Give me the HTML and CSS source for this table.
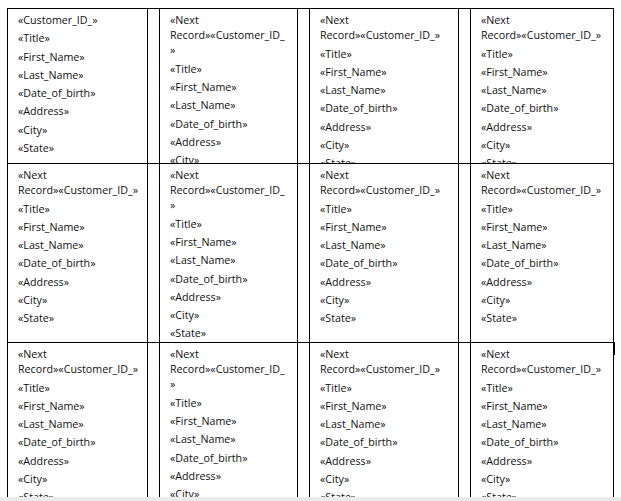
FILE: index.html
```html
<!DOCTYPE html>
<html lang="en">
<head>
<meta charset="utf-8">
<title>Mail merge labels</title>
<link rel="stylesheet" href="styles.css">
</head>
<body>
<div class="page">
  <div class="viewport">
    <div class="sheet">
      <!-- row 1 -->
      <div class="label">
        <p>«Customer_ID_»</p><p>«Title»</p><p>«First_Name»</p><p>«Last_Name»</p><p>«Date_of_birth»</p><p>«Address»</p><p>«City»</p><p>«State»</p>
      </div>
      <div class="gap"></div>
      <div class="label">
        <p>«Next Record»«Customer_ID_<br>»</p><p>«Title»</p><p>«First_Name»</p><p>«Last_Name»</p><p>«Date_of_birth»</p><p>«Address»</p><p>«City»</p><p>«State»</p>
      </div>
      <div class="gap"></div>
      <div class="label">
        <p>«Next Record»«Customer_ID_»</p><p>«Title»</p><p>«First_Name»</p><p>«Last_Name»</p><p>«Date_of_birth»</p><p>«Address»</p><p>«City»</p><p>«State»</p>
      </div>
      <div class="gap"></div>
      <div class="label">
        <p>«Next Record»«Customer_ID_»</p><p>«Title»</p><p>«First_Name»</p><p>«Last_Name»</p><p>«Date_of_birth»</p><p>«Address»</p><p>«City»</p><p>«State»</p>
      </div>
      <!-- row 2 -->
      <div class="label">
        <p>«Next Record»«Customer_ID_»</p><p>«Title»</p><p>«First_Name»</p><p>«Last_Name»</p><p>«Date_of_birth»</p><p>«Address»</p><p>«City»</p><p>«State»</p>
      </div>
      <div class="gap"></div>
      <div class="label">
        <p>«Next Record»«Customer_ID_<br>»</p><p>«Title»</p><p>«First_Name»</p><p>«Last_Name»</p><p>«Date_of_birth»</p><p>«Address»</p><p>«City»</p><p>«State»</p>
      </div>
      <div class="gap"></div>
      <div class="label">
        <p>«Next Record»«Customer_ID_»</p><p>«Title»</p><p>«First_Name»</p><p>«Last_Name»</p><p>«Date_of_birth»</p><p>«Address»</p><p>«City»</p><p>«State»</p>
      </div>
      <div class="gap"></div>
      <div class="label">
        <p>«Next Record»«Customer_ID_»</p><p>«Title»</p><p>«First_Name»</p><p>«Last_Name»</p><p>«Date_of_birth»</p><p>«Address»</p><p>«City»</p><p>«State»</p>
      </div>
      <!-- row 3 -->
      <div class="label">
        <p>«Next Record»«Customer_ID_»</p><p>«Title»</p><p>«First_Name»</p><p>«Last_Name»</p><p>«Date_of_birth»</p><p>«Address»</p><p>«City»</p><p>«State»</p>
      </div>
      <div class="gap"></div>
      <div class="label">
        <p>«Next Record»«Customer_ID_<br>»</p><p>«Title»</p><p>«First_Name»</p><p>«Last_Name»</p><p>«Date_of_birth»</p><p>«Address»</p><p>«City»</p><p>«State»</p>
      </div>
      <div class="gap"></div>
      <div class="label">
        <p>«Next Record»«Customer_ID_»</p><p>«Title»</p><p>«First_Name»</p><p>«Last_Name»</p><p>«Date_of_birth»</p><p>«Address»</p><p>«City»</p><p>«State»</p>
      </div>
      <div class="gap"></div>
      <div class="label">
        <p>«Next Record»«Customer_ID_»</p><p>«Title»</p><p>«First_Name»</p><p>«Last_Name»</p><p>«Date_of_birth»</p><p>«Address»</p><p>«City»</p><p>«State»</p>
      </div>
    </div>
  </div>
  <div class="statusbar"></div>
  <span class="rowmark"></span>
</div>
</body>
</html>
```
FILE: styles.css
```css
* { box-sizing: border-box; }

html, body {
  margin: 0;
  padding: 0;
  background: #ffffff;
}

.page {
  position: relative;
  width: 621px;
  height: 501px;
  display: flex;
  flex-direction: column;
  font-family: "Open Sans", "Noto Sans", "DejaVu Sans", sans-serif;
  font-size: 10.7px;
  color: #111111;
}

.viewport {
  flex: 1;
  overflow: hidden;
  padding: 8px 0 0 7px;
}

.sheet {
  display: grid;
  grid-template-columns: 140px 12px 138px 12px 149px 12px 143px;
  grid-template-rows: 155px 179px 180px;
  width: max-content;
  border-left: 1px solid #000;
  border-top: 1px solid #000;
}

.label,
.gap {
  border-right: 1px solid #000;
  border-bottom: 1px solid #000;
  overflow: hidden;
}

.label {
  padding: 4px 6px 0 10px;
}

.label p {
  margin: 0 0 3.1px;
  line-height: 15.2px;
}

.statusbar {
  height: 4px;
  background: #ebebeb;
}

.rowmark {
  position: absolute;
  left: 614px;
  top: 342px;
  width: 1px;
  height: 13px;
  background: #000;
}
```
